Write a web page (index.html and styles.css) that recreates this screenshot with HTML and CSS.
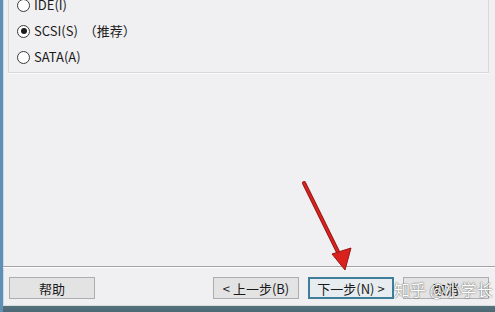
FILE: index.html
```html
<!DOCTYPE html>
<html lang="zh-CN">
<head>
    <meta charset="UTF-8">
    <title>新建虚拟机向导</title>
    <link rel="stylesheet" href="styles.css">
</head>
<body>
    <div class="window">
        <div class="groupBox">
            <label class="option"><span class="radio"></span>IDE(I)</label>
            <label class="option"><span class="radio checked"></span>SCSI(S)<span class="note">（推荐）</span></label>
            <label class="option"><span class="radio"></span>SATA(A)</label>
        </div>
        <div class="spacer"></div>
        <div class="footer">
            <button class="btn">帮助</button>
            <div class="navButtons">
                <button class="btn">&lt; 上一步(B)</button>
                <button class="btn primary">下一步(N) &gt;</button>
                <button class="btn">取消</button>
            </div>
        </div>
        <div class="edge"></div>

        <svg class="arrow" width="495" height="312" viewBox="0 0 495 312">
            <line x1="304" y1="183" x2="338" y2="252" stroke="#8c1414" stroke-width="4" stroke-linecap="round"/>
            <line x1="304" y1="183" x2="338" y2="252" stroke="#d9221e" stroke-width="2.4" stroke-linecap="round"/>
            <polygon points="345,270 332,254 351,248" fill="#d9221e" stroke="#9a1616" stroke-width="1"/>
        </svg>
        <div class="watermark">知乎 @小学长</div>
    </div>
</body>
</html>
```

FILE: styles.css
```css
body {
    margin: 0;
    padding: 0;
    width: 495px;
    height: 312px;
    overflow: hidden;
    font-family: "Noto Sans CJK SC", "Noto Sans", sans-serif;
    font-size: 13px;
    color: #1a1a1a;
}

.window {
    position: relative;
    display: flex;
    flex-direction: column;
    height: 312px;
    box-sizing: border-box;
    background-color: #f0eff1;
    border-left: 3px solid #5f8fb3;
    box-shadow: inset 1px 0 0 #c9dbe8;
    overflow: hidden;
}

.groupBox {
    margin: -9px 6px 0 5px;
    padding: 0 0 2px 8px;
    border: 1px solid #d9d9db;
    box-shadow: 0 1px 0 #fbfbfb;
}

.option {
    display: flex;
    align-items: center;
    height: 26px;
    line-height: 26px;
}

.radio {
    width: 11px;
    height: 11px;
    margin-right: 4px;
    border: 1px solid #3a3a3a;
    border-radius: 50%;
    background-color: #fff;
    position: relative;
}

.radio.checked::after {
    content: "";
    position: absolute;
    top: 2.5px;
    left: 2.5px;
    width: 6px;
    height: 6px;
    border-radius: 50%;
    background-color: #1c1c1c;
}

.note {
    margin-left: 6px;
}

.spacer {
    flex: 1;
}

.footer {
    display: flex;
    align-items: flex-start;
    padding: 10px 6px 6px 6px;
    border-top: 1px solid #a3a3a5;
    box-shadow: inset 0 1px 0 #fdfdfd;
}

.navButtons {
    display: flex;
    gap: 9px;
    margin-left: auto;
}

.btn {
    width: 86px;
    height: 22px;
    padding: 0;
    font-family: "Noto Sans CJK SC", "Noto Sans", sans-serif;
    font-size: 13px;
    color: #1a1a1a;
    background-color: #e3e3e3;
    border: 1px solid #adadad;
}

.btn.primary {
    border: 2px solid #3f7d98;
    background-color: #e6ecf0;
}

.edge {
    height: 7px;
    background: linear-gradient(to bottom, #d8dde0 0, #d8dde0 1px, #56717c 1px, #4b6a76 100%);
}

.arrow {
    position: absolute;
    top: 0;
    left: -3px;
    pointer-events: none;
}

.watermark {
    position: absolute;
    left: 391px;
    top: 277px;
    font-size: 16px;
    color: #ffffff;
    text-shadow: 0 0 1px rgba(0, 0, 0, 0.6), 0 0 2px rgba(0, 0, 0, 0.35);
    white-space: nowrap;
    pointer-events: none;
}
```
